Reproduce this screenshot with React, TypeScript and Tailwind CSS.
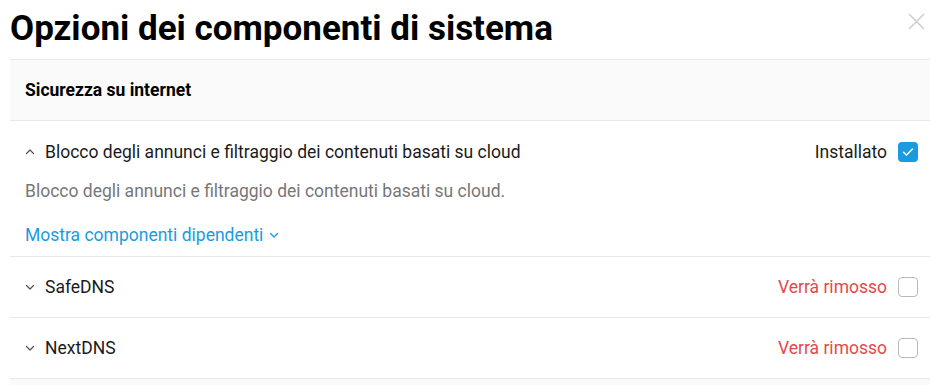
import React from "react";

const Chevron = ({ up = false, className = "" }: { up?: boolean; className?: string }) => (
  <svg width="10" height="10" viewBox="0 0 10 10" className={className} fill="none">
    <path
      d={up ? "M1.5 6.5 L5 3 L8.5 6.5" : "M1.5 3.5 L5 7 L8.5 3.5"}
      stroke="currentColor"
      strokeWidth="1.3"
      strokeLinecap="round"
      strokeLinejoin="round"
    />
  </svg>
);

const Checked = () => (
  <div className="w-5 h-5 rounded-[4px] bg-[#1a9be0] flex items-center justify-center">
    <svg width="12" height="10" viewBox="0 0 12 10" fill="none">
      <path d="M1.5 5.2 L4.5 8 L10.5 2" stroke="white" strokeWidth="1.5" strokeLinecap="round" strokeLinejoin="round" />
    </svg>
  </div>
);

const Unchecked = () => <div className="w-5 h-5 rounded-[4px] border border-[#b9b9b9] bg-white" />;

export default function App() {
  return (
    <div className="w-[939px] h-[385px] overflow-hidden bg-white text-[#1b1b1b]" style={{ fontFamily: "Roboto, 'Noto Sans', sans-serif" }}>
      <div className="relative px-[10px]">
        <div className="h-[59px] flex items-center">
          <h1 className="text-[35px] font-bold leading-none text-black pb-[2px]">Opzioni dei componenti di sistema</h1>
        </div>
        <button className="absolute right-[14px] top-[13px] text-[#cfcfcf]">
          <svg width="17" height="17" viewBox="0 0 17 17" fill="none">
            <path d="M1.5 1.5 L15.5 15.5 M15.5 1.5 L1.5 15.5" stroke="currentColor" strokeWidth="1.6" strokeLinecap="round" />
          </svg>
        </button>
        <div className="w-[920px]">
          <div className="h-[62px] bg-[#fafafa] border-y border-[#e8e8e8] flex items-center pl-[15px] pr-[12px]">
            <span className="text-[17.5px] font-bold text-black">Sicurezza su internet</span>
          </div>
          <div className="border-b border-[#e8e8e8] pl-[15px] pr-[12px] pt-[19px] pb-[9px]">
            <div className="flex items-center h-[24px]">
              <Chevron up className="text-[#555] mr-[10px]" />
              <span className="text-[17.5px] leading-[24px] flex-1">Blocco degli annunci e filtraggio dei contenuti basati su cloud</span>
              <span className="text-[17.5px] leading-[24px] mr-[11px]">Installato</span>
              <Checked />
            </div>
            <div className="mt-[15px] text-[17.5px] leading-[24px] text-[#777]">Blocco degli annunci e filtraggio dei contenuti basati su cloud.</div>
            <div className="mt-[20px] flex items-center text-[17.5px] leading-[24px] text-[#1a9be0]">
              <span>Mostra componenti dipendenti</span>
              <Chevron className="ml-[6px]" />
            </div>
          </div>
          {["SafeDNS", "NextDNS"].map((n) => (
            <div key={n} className="h-[61px] border-b border-[#e8e8e8] pl-[15px] pr-[12px] flex items-center">
              <Chevron className="text-[#555] mr-[10px]" />
              <span className="text-[17.5px] flex-1">{n}</span>
              <span className="text-[17.5px] text-[#e5484b] mr-[11px]">Verrà rimosso</span>
              <Unchecked />
            </div>
          ))}
          <div className="h-[20px] bg-[#fafafa]" />
        </div>
      </div>
    </div>
  );
}
